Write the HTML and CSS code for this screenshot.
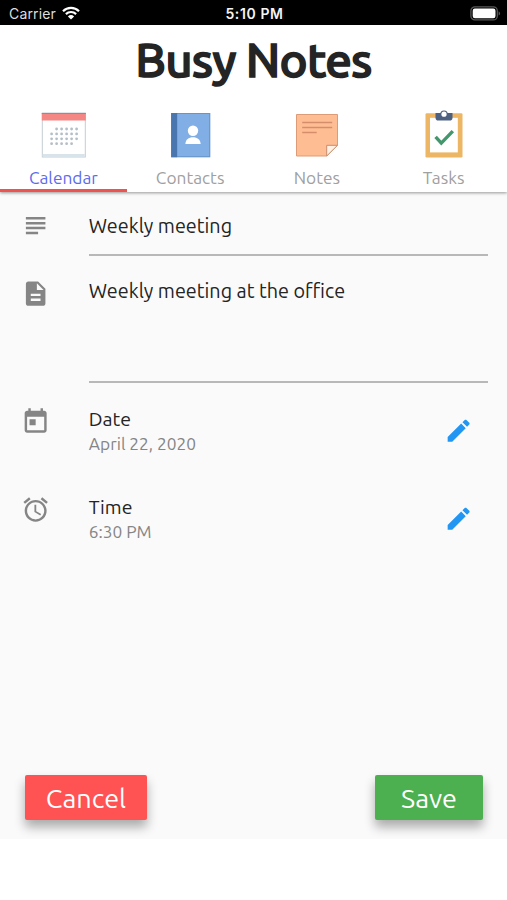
FILE: index.html
```
<!DOCTYPE html>
<html lang="en">
<head>
    <meta charset="UTF-8">
    <meta name="viewport" content="width=device-width, initial-scale=1.0">
    <title>Busy Notes</title>
    <link rel="stylesheet" href="styles.css">
</head>
<body>

<!-- Status bar -->
<div class="status">
    <div class="carrier">
        <span>Carrier</span>
        <svg class="wifi" viewBox="0 0 18 14" width="18" height="14">
            <path d="M1 5.2a11.4 11.4 0 0 1 16 0M3.9 8.1a7.3 7.3 0 0 1 10.2 0" fill="none" stroke="#fff" stroke-width="2.2"/>
            <path d="M9 13.6L5.9 10.5a4.5 4.5 0 0 1 6.2 0z" fill="#fff"/>
        </svg>
    </div>
    <div class="clock">5:10 PM</div>
    <svg class="battery" viewBox="0 0 31 15" width="31" height="15">
        <rect x="0.9" y="0.9" width="26.4" height="13" rx="4" fill="none" stroke="#58585a" stroke-width="1.3"/>
        <rect x="2.7" y="2.5" width="22.8" height="9.8" rx="2.2" fill="#fff"/>
        <path d="M28.6 5.2c2 .8 2 3.6 0 4.4z" fill="#58585a"/>
    </svg>
</div>

<header class="header">
    <h1>Busy Notes</h1>
    <nav class="tabs">
        <a class="tab active">
            <svg viewBox="0 0 48 48" width="48" height="48">
                <rect x="3.3" y="2" width="43" height="44" fill="#fff" stroke="#c3ced5"/>
                <rect x="3.8" y="43" width="42" height="3" fill="#d9e4ea"/>
                <rect x="2.8" y="2" width="44" height="7.5" fill="#f48684"/>
                <path d="M2.8 2.5h44" stroke="#d8706f"/>
                <g stroke="#b4bec6" stroke-width="2.8" stroke-linecap="round" stroke-dasharray="0 5">
                    <path d="M17.6 18h20.2"/>
                    <path d="M12.6 22.9h25.2"/>
                    <path d="M12.6 27.800h25.2"/>
                    <path d="M12.6 32.700h20.2"/>
                </g>
            </svg>
            <span>Calendar</span>
        </a>
        <a class="tab">
            <svg viewBox="0 0 48 48" width="48" height="48">
                <rect x="5.200" y="2" width="39" height="44.200" fill="#82aee6"/>
                <rect x="5.700" y="2.500" width="38" height="43.200" fill="none" stroke="#6794c9"/>
                <rect x="5.200" y="2" width="6" height="44.200" fill="#4a76af"/>
                <circle cx="27" cy="19.700" r="5.200" fill="#fff"/>
                <path d="M19.300 33c.4-4.700 3.400-6.800 7.700-6.800s7.300 2.100 7.700 6.800z" fill="#fff"/>
            </svg>
            <span>Contacts</span>
        </a>
        <a class="tab">
            <svg viewBox="0 0 48 48" width="48" height="48">
                <path d="M3.500 3.500h41v30.500L33.700 45H3.500z" fill="#ffbd94" stroke="#dd9b78"/>
                <path d="M33.700 45V34.300h10.800z" fill="#fff0e4" stroke="#c98b6d"/>
                <path d="M9.200 11.500h30M9.200 16.500h30M9.200 21.500h14.500" stroke="#d58e6c" stroke-width="1.300"/>
            </svg>
            <span>Notes</span>
        </a>
        <a class="tab">
            <svg viewBox="0 0 48 48" width="48" height="48">
                <rect x="5.500" y="2.200" width="37" height="44.200" rx="1.200" fill="#ecb664"/>
                <rect x="10" y="6.800" width="27.800" height="34.600" fill="#fff"/>
                <path d="M15.500 2.100h17v4.600q0 2.800-2.800 2.800H18.300q-2.800 0-2.800-2.800z" fill="#4d6080"/>
                <circle cx="24" cy="3.200" r="3.800" fill="#4d6080"/>
                <circle cx="24" cy="3.200" r="2.600" fill="#fff"/>
                <path d="M15.600 25.800l5.700 6.300L32.800 20.100" fill="none" stroke="#44966c" stroke-width="3.400"/>
            </svg>
            <span>Tasks</span>
        </a>
    </nav>
</header>

<main class="entry">
    <div class="row title-row">
        <svg class="icon" viewBox="0 0 24 24"><path d="M14 17H4v2h10v-2zm6-8H4v2h16V9zM4 15h16v-2H4v2zM4 5v2h16V5H4z"/></svg>
        <div class="field">Weekly meeting</div>
    </div>
    <div class="row desc-row">
        <svg class="icon" viewBox="0 0 24 24"><path d="M14 2H6c-1.100 0-1.990.900-1.990 2L4 20c0 1.100.890 2 1.990 2H18c1.100 0 2-.900 2-2V8l-6-6zm2 16H8v-2h8v2zm0-4H8v-2h8v2zm-3-5V3.500L18.500 9H13z"/></svg>
        <div class="field">Weekly meeting at the office</div>
    </div>
    <div class="row pick-row">
        <svg class="icon" viewBox="0 0 24 24"><path d="M19 3h-1V1h-2v2H8V1H6v2H5c-1.110 0-1.990.900-1.990 2L3 19c0 1.100.890 2 2 2h14c1.100 0 2-.900 2-2V5c0-1.100-.900-2-2-2zm0 16H5V8h14v11zM7 10h5v5H7z"/></svg>
        <div class="text">
            <div class="label">Date</div>
            <div class="value">April 22, 2020</div>
        </div>
        <svg class="icon edit" viewBox="0 0 24 24"><path d="M3 17.250V21h3.750L17.810 9.940l-3.750-3.750L3 17.250zM20.710 7.040c.390-.390.390-1.020 0-1.410l-2.340-2.340c-.390-.390-1.020-.390-1.410 0l-1.830 1.830 3.750 3.750 1.830-1.830z"/></svg>
    </div>
    <div class="row pick-row">
        <svg class="icon" viewBox="0 0 24 24"><path d="M22 5.720l-4.600-3.860-1.290 1.530 4.600 3.860L22 5.720zM7.880 3.390L6.600 1.860 2 5.710l1.290 1.530 4.590-3.850zM12.500 8H11v6l4.750 2.850.750-1.230-4-2.370V8zM12 4c-4.970 0-9 4.030-9 9s4.020 9 9 9c4.970 0 9-4.030 9-9s-4.030-9-9-9zm0 16c-3.870 0-7-3.130-7-7s3.130-7 7-7 7 3.130 7 7-3.130 7-7 7z"/></svg>
        <div class="text">
            <div class="label">Time</div>
            <div class="value">6:30 PM</div>
        </div>
        <svg class="icon edit" viewBox="0 0 24 24"><path d="M3 17.250V21h3.750L17.810 9.940l-3.750-3.750L3 17.250zM20.710 7.040c.390-.390.390-1.020 0-1.410l-2.340-2.340c-.390-.390-1.020-.390-1.410 0l-1.830 1.830 3.750 3.750 1.830-1.830z"/></svg>
    </div>

    <div class="actions">
        <button class="btn cancel">Cancel</button>
        <button class="btn save">Save</button>
    </div>
</main>

</body>
</html>
```
FILE: styles.css
```
* {
    box-sizing: border-box;
}

body {
    margin: 0;
    height: 900px;
    display: flex;
    flex-direction: column;
    overflow: hidden;
    background: #fff;
    color: #242424;
    font-family: Ubuntu, "Noto Sans", sans-serif;
}

/* Status bar */
.status {
    height: 25px;
    flex-shrink: 0;
    display: grid;
    grid-template-columns: 1fr auto 1fr;
    align-items: center;
    padding: 2px 6px 0 9px;
    background: #000;
    color: #fff;
    font: 14px Inter, sans-serif;
}

.carrier {
    display: flex;
    align-items: center;
    gap: 6px;
    color: #ddd;
    letter-spacing: 0.15px;
}

.wifi {
    margin-top: -2px;
}

.clock {
    margin-left: -1px;
    font-weight: 600;
    letter-spacing: 0.6px;
    color: #f4f4f4;
}

.battery {
    justify-self: end;
    margin-top: -1px;
}

/* Header and tabs */
.header {
    position: relative;
    height: 167px;
    flex-shrink: 0;
    background: #fff;
    box-shadow: 0 1px 3px rgba(0, 0, 0, 0.4);
}

h1 {
    margin: 0;
    height: 85px;
    line-height: 70px;
    text-align: center;
    font-size: 47.5px;
    font-weight: 500;
    letter-spacing: -0.8px;
    -webkit-text-stroke: 1.5px #242424;
}

.tabs {
    display: grid;
    grid-template-columns: repeat(4, 1fr);
    height: 82px;
}

.tab {
    display: flex;
    flex-direction: column;
    align-items: center;
    border-bottom: 3px solid transparent;
    color: #a0a0a0;
    font-size: 17.3px;
    line-height: 38px;
}

.tab svg {
    flex-shrink: 0;
    margin-top: 1px;
    overflow: visible;
}

.tab span {
    height: 30px;
}

.tab.active {
    color: #5a6bee;
    border-color: #ef5350;
}

/* Form */
.entry {
    height: 647px;
    display: flex;
    flex-direction: column;
    background: #fafafa;
}

.row {
    display: flex;
    align-items: flex-start;
    padding: 0 19.5px 0 20.5px;
}

.icon {
    width: 29.3px;
    height: 29.3px;
    flex-shrink: 0;
    fill: #858585;
}

.field {
    flex: 1;
    margin-left: 39px;
    border-bottom: 2px solid #b8b8b8;
    font-size: 19.8px;
    line-height: 30px;
}

.title-row {
    padding-top: 19px;
}

.title-row .field {
    height: 45px;
}

.desc-row {
    padding-top: 20px;
}

.desc-row .field {
    height: 107px;
}

.desc-row .icon {
    margin-top: 3px;
}

.pick-row {
    height: 88px;
    padding-top: 24px;
}

.pick-row .icon {
    margin-top: -0.5px;
}

.text {
    flex: 1;
    margin-left: 39px;
}

.label {
    font-size: 19.5px;
    line-height: 25px;
}

.value {
    color: #858585;
    font-size: 17.3px;
    line-height: 24px;
}

.pick-row .edit {
    margin: 9px 14.5px 0 0;
    fill: #2196f3;
}

/* Buttons */
.actions {
    display: flex;
    justify-content: space-between;
    margin-top: auto;
    padding: 0 24px 19px 25px;
}

.btn {
    height: 45px;
    padding: 0;
    border: 0;
    border-radius: 2px;
    color: #fff;
    font-family: inherit;
    font-size: 27px;
    line-height: 46px;
    box-shadow: 0 7px 11px rgba(0, 0, 0, 0.32);
}

.cancel {
    width: 122px;
    background: #ff5252;
}

.save {
    width: 108px;
    background: #4caf50;
}
```
